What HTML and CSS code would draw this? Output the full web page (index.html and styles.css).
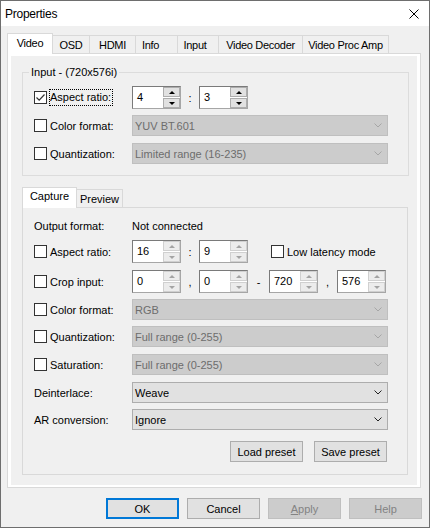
FILE: index.html
```html
<!DOCTYPE html>
<html>
<head>
<meta charset="utf-8">
<title>Properties</title>
<link rel="stylesheet" href="styles.css">
</head>
<body>
<div class="window">
  <div class="titlebar">
    <span class="title">Properties</span>
    <svg class="close" width="10" height="10" viewBox="0 0 10 10"><path d="M0.5 0.5L9.5 9.5M9.5 0.5L0.5 9.5" stroke="#000" stroke-width="1" fill="none"/></svg>
  </div>
  <div class="body">
    <div class="tabs">
      <div class="tab sel t-video">Video</div>
      <div class="tab t-osd">OSD</div>
      <div class="tab t-hdmi">HDMI</div>
      <div class="tab t-info">Info</div>
      <div class="tab t-input">Input</div>
      <div class="tab t-vd">Video Decoder</div>
      <div class="tab t-vpa">Video Proc Amp</div>
    </div>
    <div class="panel">
      <div class="page">
        <fieldset class="group">
          <legend class="legend">Input - (720x576i)</legend>
          <div class="group-body">
            <div class="row">
              <div class="lab"><span class="cb"><svg width="11" height="11" viewBox="0 0 11 11"><path d="M1.5 5.5L4.2 8.2L9.5 2.5" stroke="#333" stroke-width="1.2" fill="none"/></svg></span><span class="focus">Aspect ratio:</span></div>
              <div class="spin"><span class="val">4</span><span class="spinbtns"><span class="sb up"></span><span class="sb dn"></span></span></div>
              <span class="sep s18">:</span>
              <div class="spin"><span class="val">3</span><span class="spinbtns"><span class="sb up"></span><span class="sb dn"></span></span></div>
            </div>
            <div class="row mt6">
              <div class="lab"><span class="cb"></span><span class="txt">Color format:</span></div>
              <div class="combo dis"><span>YUV BT.601</span><svg class="chev" width="8" height="5" viewBox="0 0 8 5"><path d="M0.5 0.5L4 4L7.5 0.5" stroke="#a6a6a6" stroke-width="1" fill="none"/></svg></div>
            </div>
            <div class="row mt7">
              <div class="lab"><span class="cb"></span><span class="txt">Quantization:</span></div>
              <div class="combo dis"><span>Limited range (16-235)</span><svg class="chev" width="8" height="5" viewBox="0 0 8 5"><path d="M0.5 0.5L4 4L7.5 0.5" stroke="#a6a6a6" stroke-width="1" fill="none"/></svg></div>
            </div>
          </div>
        </fieldset>

        <div class="tabs subtabs">
          <div class="tab sel t-capture">Capture</div>
          <div class="tab t-preview">Preview</div>
        </div>
        <div class="subpanel">
          <div class="row out">
            <div class="lab">Output format:</div>
            <span>Not connected</span>
          </div>
          <div class="row mt4">
            <div class="lab"><span class="cb"></span><span class="txt">Aspect ratio:</span></div>
            <div class="spin soft"><span class="val">16</span><span class="spinbtns"><span class="sb up"></span><span class="sb dn"></span></span></div>
            <span class="sep s18">:</span>
            <div class="spin soft"><span class="val">9</span><span class="spinbtns"><span class="sb up"></span><span class="sb dn"></span></span></div>
            <div class="ll"><span class="cb"></span><span class="txt">Low latency mode</span></div>
          </div>
          <div class="row mt7">
            <div class="lab"><span class="cb"></span><span class="txt">Crop input:</span></div>
            <div class="spin soft"><span class="val">0</span><span class="spinbtns"><span class="sb up"></span><span class="sb dn"></span></span></div>
            <span class="sep s18">,</span>
            <div class="spin soft"><span class="val">0</span><span class="spinbtns"><span class="sb up"></span><span class="sb dn"></span></span></div>
            <span class="sep s21">-</span>
            <div class="spin soft"><span class="val">720</span><span class="spinbtns"><span class="sb up"></span><span class="sb dn"></span></span></div>
            <span class="sep s19">,</span>
            <div class="spin soft"><span class="val">576</span><span class="spinbtns"><span class="sb up"></span><span class="sb dn"></span></span></div>
          </div>
          <div class="row mt6">
            <div class="lab"><span class="cb"></span><span class="txt">Color format:</span></div>
            <div class="combo dis"><span>RGB</span><svg class="chev" width="8" height="5" viewBox="0 0 8 5"><path d="M0.5 0.5L4 4L7.5 0.5" stroke="#a6a6a6" stroke-width="1" fill="none"/></svg></div>
          </div>
          <div class="row mt6">
            <div class="lab"><span class="cb"></span><span class="txt">Quantization:</span></div>
            <div class="combo dis"><span>Full range (0-255)</span><svg class="chev" width="8" height="5" viewBox="0 0 8 5"><path d="M0.5 0.5L4 4L7.5 0.5" stroke="#a6a6a6" stroke-width="1" fill="none"/></svg></div>
          </div>
          <div class="row mt7">
            <div class="lab"><span class="cb"></span><span class="txt">Saturation:</span></div>
            <div class="combo dis"><span>Full range (0-255)</span><svg class="chev" width="8" height="5" viewBox="0 0 8 5"><path d="M0.5 0.5L4 4L7.5 0.5" stroke="#a6a6a6" stroke-width="1" fill="none"/></svg></div>
          </div>
          <div class="row mt7">
            <div class="lab">Deinterlace:</div>
            <div class="combo"><span>Weave</span><svg class="chev" width="8" height="5" viewBox="0 0 8 5"><path d="M0.5 0.5L4 4L7.5 0.5" stroke="#222" stroke-width="1" fill="none"/></svg></div>
          </div>
          <div class="row mt6">
            <div class="lab">AR conversion:</div>
            <div class="combo"><span>Ignore</span><svg class="chev" width="8" height="5" viewBox="0 0 8 5"><path d="M0.5 0.5L4 4L7.5 0.5" stroke="#222" stroke-width="1" fill="none"/></svg></div>
          </div>
          <div class="row presets">
            <div class="btn">Load preset</div>
            <div class="btn">Save preset</div>
          </div>
        </div>
      </div>
    </div>
    <div class="buttons">
      <div class="btn def">OK</div>
      <div class="btn">Cancel</div>
      <div class="btn dis"><span class="u">A</span>pply</div>
      <div class="btn dis">Help</div>
    </div>
  </div>
</div>
</body>
</html>
```
FILE: styles.css
```css
* { box-sizing: border-box; }
html, body { margin: 0; padding: 0; }
body {
  font-family: "Liberation Sans", Arial, sans-serif;
  font-size: 11px;
  color: #000;
  background: #f0f0f0;
}
.window {
  width: 430px;
  height: 528px;
  border: 1px solid #6e6e6e;
  background: #f0f0f0;
}
.titlebar {
  height: 25px;
  background: #fff;
  display: flex;
  align-items: center;
  justify-content: space-between;
  padding: 0 10px 0 4px;
}
.title { font-size: 12px; letter-spacing: -0.25px; }
.close { display: block; }

.body { padding: 7px 7px 0 6px; }

.tabs {
  display: flex;
  align-items: flex-end;
  height: 20px;
}
.tab {
  height: 18px;
  border-top: 1px solid #d9d9d9;
  border-right: 1px solid #d9d9d9;
  background: #f0f0f0;
  text-align: center;
  padding-top: 2px;
  line-height: 14px;
  white-space: nowrap;
  letter-spacing: -0.3px;
  flex: none;
}
.tab.sel {
  height: 21px;
  margin-bottom: -1px;
  background: #fff;
  border-left: 1px solid #d9d9d9;
  position: relative;
  z-index: 1;
}
.t-video { width: 46px; }
.t-osd { width: 37px; }
.t-hdmi { width: 46px; }
.t-info { width: 42px; padding-right: 12px; }
.t-input { width: 41px; padding-right: 6px; }
.t-vd { width: 84px; }
.t-vpa { width: 86px; }
.t-capture { width: 55px; padding-top: 1px; letter-spacing: 0; }
.t-preview { width: 46px; letter-spacing: 0; }

.panel {
  width: 414px;
  border: 1px solid #d9d9d9;
  background: #fff;
  padding: 2px 3px;
}
.page {
  background: #f0f0f0;
  padding: 9px 0 10px 11px;
}

.group {
  width: 387px;
  min-width: 0;
  margin: 0;
  padding: 0;
  border: 1px solid #dcdcdc;
}
.legend {
  margin-left: 6px;
  padding: 0 2px;
  line-height: 14px;
}
.group-body { padding: 7px 0 11px 11px; }

.subtabs { margin-top: 11px; }
.subpanel {
  width: 386px;
  border: 1px solid #d9d9d9;
  padding: 8px 0 12px 11px;
}

.row { display: flex; align-items: center; }
.row.out { height: 20px; }
.mt4 { margin-top: 4px; }
.mt6 { margin-top: 6px; }
.mt7 { margin-top: 7px; }

.lab {
  width: 98px;
  flex: none;
  display: flex;
  align-items: center;
  white-space: nowrap;
}
.cb {
  width: 13px;
  height: 13px;
  border: 1px solid #333;
  background: #fff;
  flex: none;
  display: block;
}
.cb svg { display: block; }
.txt { margin-left: 3px; }
.focus {
  margin-left: 2px;
  border: 1px dotted #000;
  line-height: 15px;
  padding-right: 1px;
}

.spin {
  width: 49px;
  height: 23px;
  border: 1px solid #a0a0a0;
  border-color: #7a7a7a #a6a6a6 #a6a6a6 #7a7a7a;
  background: #fff;
  display: flex;
  flex: none;
}
.val {
  flex: 1;
  padding: 3px 0 0 4px;
  line-height: 14px;
}
.spinbtns {
  width: 17px;
  display: flex;
  flex-direction: column;
  gap: 1px;
}
.sb {
  height: 10px;
  border: 1px solid #adadad;
  background: #e1e1e1;
  display: flex;
  align-items: center;
  justify-content: center;
}
.sb::after {
  content: "";
  border-left: 3px solid transparent;
  border-right: 3px solid transparent;
}
.sb.up::after { border-bottom: 3px solid #000; }
.sb.dn::after { border-top: 3px solid #000; }
.soft .sb { border-color: #d0d0d0; background: #ececec; }
.soft .sb.up::after { border-bottom-color: #a3a3a3; }
.soft .sb.dn::after { border-top-color: #a3a3a3; }

.sep { flex: none; text-align: center; }
.s18 { width: 18px; }
.s19 { width: 19px; }
.s21 { width: 21px; }

.ll { margin-left: 23px; display: flex; align-items: center; white-space: nowrap; }

.combo {
  width: 256px;
  height: 21px;
  flex: none;
  border: 1px solid #adadad;
  background: #e1e1e1;
  display: flex;
  align-items: center;
  justify-content: space-between;
  padding: 0 5px 0 2px;
}
.combo.dis { background: #cccccc; border-color: #bfbfbf; color: #6d6d6d; }
.chev { display: block; }

.presets {
  margin-top: 11px;
  justify-content: flex-end;
  gap: 11px;
  padding-right: 20px;
}

.btn {
  width: 73px;
  height: 21px;
  flex: none;
  border: 1px solid #adadad;
  background: #e1e1e1;
  display: flex;
  align-items: center;
  justify-content: center;
  white-space: nowrap;
}
.btn.def { border: 2px solid #0078d7; }
.btn.dis { background: #cccccc; border-color: #bfbfbf; color: #838383; }
.u { text-decoration: underline; }

.buttons {
  display: flex;
  justify-content: flex-end;
  gap: 8px;
  margin-top: 10px;
}
```
